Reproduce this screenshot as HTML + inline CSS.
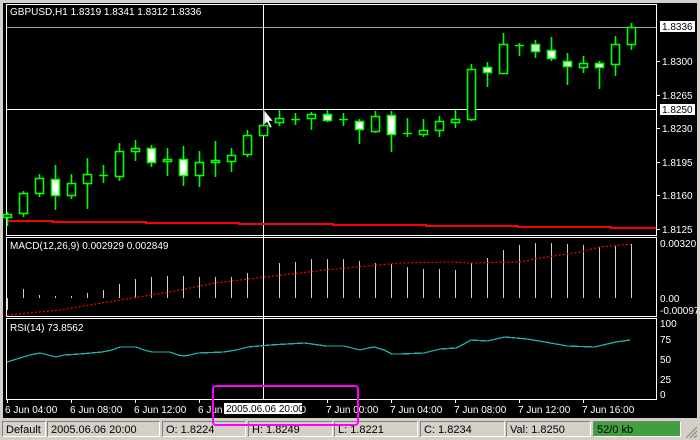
<!DOCTYPE html>
<html><head><meta charset="utf-8"><style>
html,body{margin:0;padding:0;width:700px;height:440px;overflow:hidden;background:#d4d0c8;font-family:"Liberation Sans",sans-serif}
svg{position:absolute;left:0;top:0}
.sb{position:absolute;top:421px;height:16px;border:1px solid;border-color:#808080 #fff #fff #808080;font-size:11px;line-height:16px;padding-left:3px;box-sizing:border-box;color:#000;white-space:nowrap}
</style></head><body>
<svg width="700" height="420" xmlns="http://www.w3.org/2000/svg" shape-rendering="crispEdges" font-family="Liberation Sans, sans-serif" font-size="10">
<rect x="0" y="0" width="700" height="420" fill="#d4d0c8"/>
<rect x="3" y="3" width="694" height="415" fill="#000"/>
<rect x="6.5" y="4.5" width="650" height="231" fill="none" stroke="#fff"/>
<rect x="6.5" y="237.5" width="650" height="79" fill="none" stroke="#fff"/>
<rect x="6.5" y="318.5" width="650" height="81" fill="none" stroke="#fff"/>
<line x1="7" y1="27.5" x2="656" y2="27.5" stroke="#a0a0a0"/>
<line x1="7" y1="109.5" x2="656" y2="109.5" stroke="#fff"/>
<line x1="263.5" y1="5" x2="263.5" y2="399" stroke="#fff"/>
<polyline fill="none" stroke="#ff0000" stroke-width="2" points="7,221 53,221 53,222 146,222 146,223 239,223 239,224 333,224 333,225 426,225 426,226 518,226 518,227 611,227 611,228 656,228"/>
<g fill="none" stroke="#00ff00" stroke-width="1.6" shape-rendering="auto">
<path d="M7.5 212V226M23.5 191V217M39.5 174V197M55.5 165V210M71.5 174V199M87.5 158V209M103.5 165V183M119.5 143V181M135.5 140V161M151.5 145V167M167.5 148V176M183.5 146V186M199.5 151V187M215.5 141V177M231.5 148V172M247.5 130V157M279.5 110V126M295.5 113V125M311.5 112V130M327.5 110V122M343.5 113V126M359.5 119V144M375.5 111V133M391.5 111V152M407.5 118V137M423.5 119V137M439.5 116V137M455.5 110V128M471.5 64V121M487.5 62V87M503.5 33V74M519.5 43V56M535.5 40V58M551.5 37V61M567.5 53V85M583.5 56V73M599.5 61V89M615.5 36V76M631.5 23V50"/>
<path d="M99 175.5H108M291 119.5H300M403 133.5H412M515 45.5H524M339 119.5H348"/>
</g>
<g stroke="#00ff00" stroke-width="1.6" fill="#000" shape-rendering="auto">
<rect x="3.5" y="214.5" width="8" height="3"/>
<rect x="19.5" y="193.5" width="8" height="20"/>
<rect x="35.5" y="178.5" width="8" height="15"/>
<rect x="51.5" y="179.5" width="8" height="16" fill="#fff"/>
<rect x="67.5" y="183.5" width="8" height="12"/>
<rect x="83.5" y="174.5" width="8" height="9"/>
<rect x="115.5" y="151.5" width="8" height="25"/>
<rect x="131.5" y="148.5" width="8" height="3"/>
<rect x="147.5" y="148.5" width="8" height="14" fill="#fff"/>
<rect x="163.5" y="159.5" width="8" height="2"/>
<rect x="179.5" y="159.5" width="8" height="16" fill="#fff"/>
<rect x="195.5" y="162.5" width="8" height="13"/>
<rect x="211.5" y="160.5" width="8" height="2"/>
<rect x="227.5" y="155.5" width="8" height="6"/>
<rect x="243.5" y="135.5" width="8" height="19"/>
<rect x="259.5" y="125.5" width="8" height="10"/>
<rect x="275.5" y="118.5" width="8" height="4"/>
<rect x="307.5" y="114.5" width="8" height="4"/>
<rect x="323.5" y="114.5" width="8" height="6" fill="#fff"/>
<rect x="355.5" y="121.5" width="8" height="8" fill="#fff"/>
<rect x="371.5" y="116.5" width="8" height="15"/>
<rect x="387.5" y="115.5" width="8" height="19" fill="#fff"/>
<rect x="419.5" y="130.5" width="8" height="4"/>
<rect x="435.5" y="121.5" width="8" height="9"/>
<rect x="451.5" y="119.5" width="8" height="3"/>
<rect x="467.5" y="69.5" width="8" height="50"/>
<rect x="483.5" y="67.5" width="8" height="5" fill="#fff"/>
<rect x="499.5" y="44.5" width="8" height="29"/>
<rect x="531.5" y="44.5" width="8" height="7" fill="#fff"/>
<rect x="547.5" y="50.5" width="8" height="8" fill="#fff"/>
<rect x="563.5" y="61.5" width="8" height="5" fill="#fff"/>
<rect x="579.5" y="63.5" width="8" height="4"/>
<rect x="595.5" y="63.5" width="8" height="4" fill="#fff"/>
<rect x="611.5" y="44.5" width="8" height="20"/>
<rect x="627.5" y="27.5" width="8" height="17"/>
</g>
<path d="M264 110L264 125L267 122L270 128L272 127L269 121L273 121Z" fill="#fff" stroke="#000" stroke-width="0.5" shape-rendering="auto"/>
<text x="10" y="15" fill="#fff">GBPUSD,H1  1.8319 1.8341 1.8312 1.8336</text>
<g fill="#fff">
<rect x="660" y="21" width="35" height="11"/>
<rect x="660" y="104" width="35" height="11"/>
</g>
<text x="662" y="30" fill="#000">1.8336</text>
<text x="662" y="113" fill="#000">1.8250</text>
<g fill="#fff">
<text x="662" y="65">1.8300</text>
<text x="662" y="99">1.8265</text>
<text x="662" y="132">1.8230</text>
<text x="662" y="166">1.8195</text>
<text x="662" y="199">1.8160</text>
<text x="662" y="233">1.8125</text>
</g>
<g stroke="#fff"><path d="M657 61.5H660M657 95.5H660M657 128.5H660M657 162.5H660M657 195.5H660M657 229.5H660"/></g>
<text x="10" y="249" fill="#fff">MACD(12,26,9)  0.002929  0.002849</text>
<g stroke="#d0d0d0">
<path d="M7.5 298V310M23.5 298V289M39.5 298V295M55.5 298V296M71.5 298V296M87.5 298V293M103.5 298V290M119.5 298V284M135.5 298V279M151.5 298V277M167.5 298V276M183.5 298V276M199.5 298V277M215.5 298V277M231.5 298V277M247.5 298V273M279.5 298V263M295.5 298V262M311.5 298V259M327.5 298V259M343.5 298V259M359.5 298V261M375.5 298V263M391.5 298V264M407.5 298V267M423.5 298V269M439.5 298V269M455.5 298V270M471.5 298V263M487.5 298V258M503.5 298V250M519.5 298V245M535.5 298V243M551.5 298V243M567.5 298V244M583.5 298V245M599.5 298V247M615.5 298V246M631.5 298V244"/>
</g>
<polyline fill="none" stroke="#ff0000" stroke-width="1.2" stroke-dasharray="2,2" shape-rendering="auto" points="7,315 60,310 120,300 170,292 215,283 265,277 325,270 400,263 450,262 470,263 520,262 540,258 580,252 600,247 631,244"/>
<g fill="#fff">
<text x="660" y="247">0.00320</text>
<text x="660" y="302">0.00</text>
<text x="660" y="314">-0.00097</text>
<text x="10" y="331">RSI(14)  73.8562</text>
<text x="660" y="327">100</text>
<text x="660" y="343">75</text>
<text x="660" y="363">50</text>
<text x="660" y="383">25</text>
<text x="660" y="398">0</text>
</g>
<polyline fill="none" stroke="#20b2aa" stroke-width="1.3" points="7,362 20,358 30,355 40,353 48,355 56,357 64,355 80,354 102,352 112,350 120,347 136,347 144,350 152,352 170,352 178,355 184,356 190,355 198,353 224,352 236,350 248,347 260,346 270,345 304,343 312,344 326,346 344,346 352,348 360,350 368,348 374,347 384,350 392,354 400,354 424,353 432,351 440,349 456,348 464,344 471,340 487,341 496,339 505,337 516,338 527,339 545,342 567,346 594,347 603,345 616,342 630,340"/>
<g stroke="#fff"><path d="M7.5 400V403M71.5 400V403M135.5 400V403M199.5 400V403M327.5 400V403M391.5 400V403M455.5 400V403M519.5 400V403M583.5 400V403"/></g>
<g fill="#fff">
<text x="5" y="413">6 Jun 04:00</text>
<text x="70" y="413">6 Jun 08:00</text>
<text x="134" y="413">6 Jun 12:00</text>
<text x="198" y="413">6 Jun</text>
<text x="295" y="413">00</text>
<text x="326" y="413">7 Jun 00:00</text>
<text x="390" y="413">7 Jun 04:00</text>
<text x="454" y="413">7 Jun 08:00</text>
<text x="518" y="413">7 Jun 12:00</text>
<text x="582" y="413">7 Jun 16:00</text>
</g>
<rect x="224" y="403" width="78" height="11" fill="#fff"/>
<text x="226" y="412" fill="#000">2005.06.06 20:00</text>
</svg>
<div class="sb" style="left:2px;width:44px">Default</div>
<div class="sb" style="left:47px;width:113px">2005.06.06 20:00</div>
<div class="sb" style="left:162px;width:84px">O: 1.8224</div>
<div class="sb" style="left:248px;width:85px">H: 1.8249</div>
<div class="sb" style="left:334px;width:84px">L: 1.8221</div>
<div class="sb" style="left:420px;width:85px">C: 1.8234</div>
<div class="sb" style="left:506px;width:85px">Val: 1.8250</div>
<div class="sb" style="left:593px;width:88px;background:#40a040">52/0 kb</div>
<svg width="700" height="440" style="pointer-events:none"><rect x="213" y="386" width="145" height="39" rx="3" fill="none" stroke="#f0f" stroke-width="2"/><path d="M686 438L697 427M690 438L697 431M694 438L697 435" stroke="#808080"/></svg>
</body></html>
